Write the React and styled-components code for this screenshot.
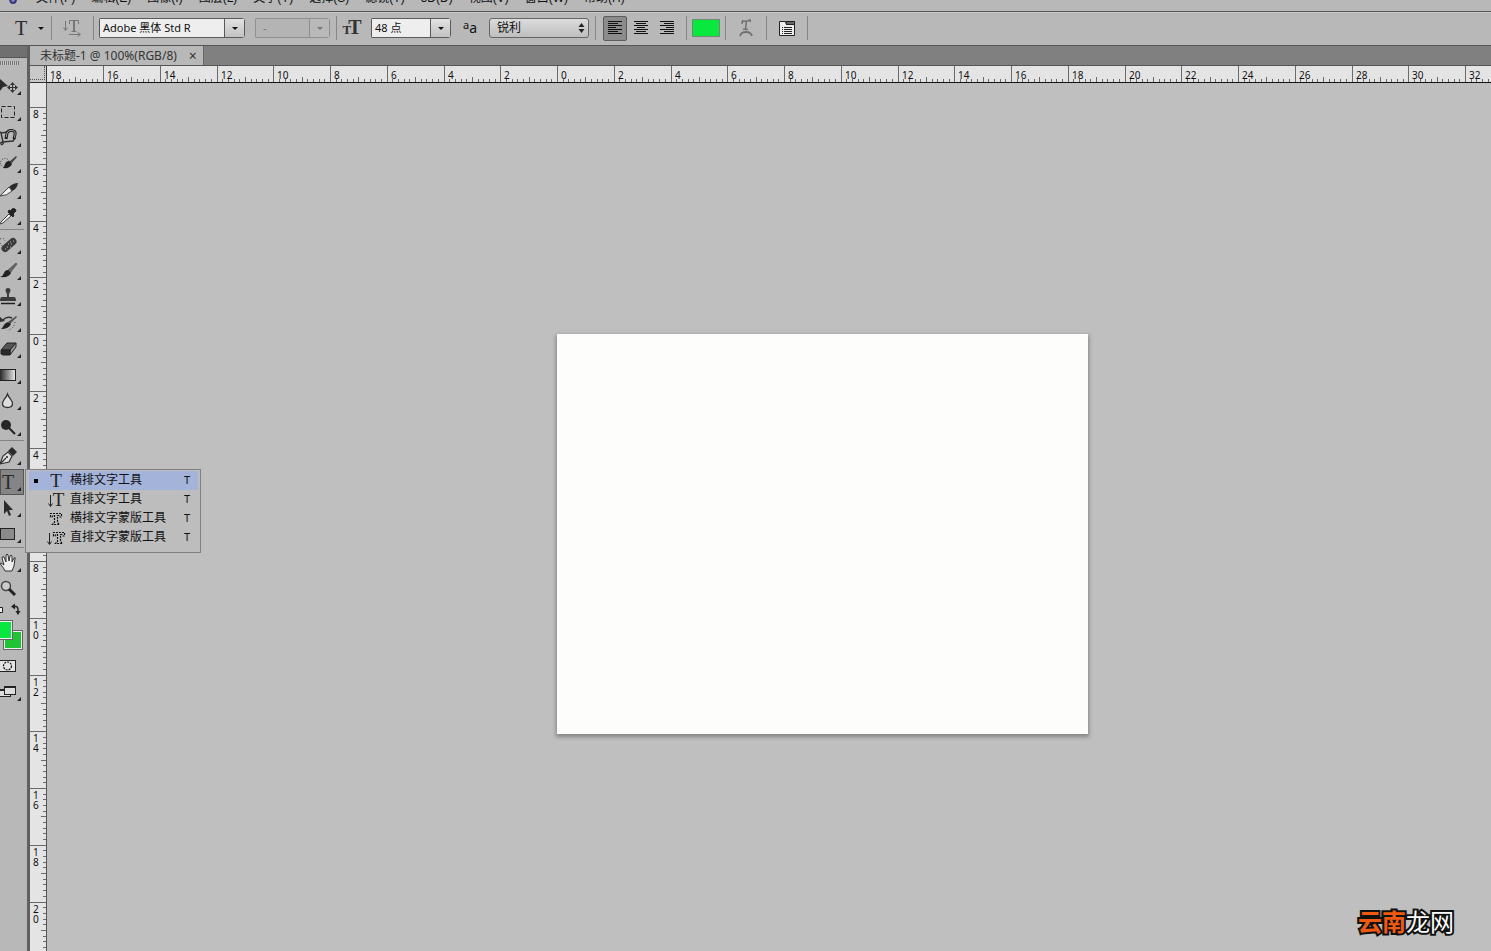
import React, { useEffect, useState } from "react";
import styled, { createGlobalStyle, css } from "styled-components";

const MENUS = [
  "文件(F)",
  "编辑(E)",
  "图像(I)",
  "图层(L)",
  "文字(Y)",
  "选择(S)",
  "滤镜(T)",
  "3D(D)",
  "视图(V)",
  "窗口(W)",
  "帮助(H)",
];

const TYPE_TOOLS = [
  { name: "横排文字工具" },
  { name: "直排文字工具", vertical: true },
  { name: "横排文字蒙版工具", mask: true },
  { name: "直排文字蒙版工具", vertical: true, mask: true },
];

// pixels per 2 units on the rulers, 10 ticks each
const STEP = 56.75;
const ORIGIN_X = 510;
const ORIGIN_Y = 251;

const dark = "#333";

const toolIcons = {
  move: (
    <>
      <path d="M0 6v12l3-4 5-1z" fill="#2b2b2b" />
      <path d="M8 14.5h9M12.5 10v9" stroke={dark} />
      <path
        d="M7 14.5l3-2.500v5zM18 14.5l-3-2.500v5zM12.5 9l-2.500 3h5zM12.5 20l-2.500-3h5z"
        fill={dark}
      />
    </>
  ),
  marquee: (
    <rect x="1.5" y="7.5" width="13" height="11" fill="none" stroke="#222" strokeDasharray="4 2" />
  ),
  lasso: (
    <>
      <path d="M0 7l2 1 5-1M1 8l2 9 10-1 2-3M3 17q-3 0-2 2t3-2" fill="none" stroke={dark} strokeWidth="1.4" />
      <path d="M6 14l1-6q1-3 5-2.500t3 4L14 14" fill="none" stroke="#222" strokeWidth="3" />
      <path d="M6.3 12l.7-4q1-3 5-2.500t3 4l-.5 3" fill="none" stroke="#999" />
    </>
  ),
  quickSelect: (
    <>
      <circle cx="5" cy="12" r="4.5" fill="none" stroke="#333" strokeDasharray="1 1.5" />
      <path d="M16 5l-7 6 2 2 6-7z" fill="#444" />
      <path d="M9 10l3 3q-2 5-9 4 1-1 2-4t4-3z" fill="#222" />
    </>
  ),
  slice: (
    <>
      <path d="M18 6q-5 0-9 4l3 4q5-2 6-8z" fill="#2b2b2b" />
      <path d="M9 10l-9 9q7 0 12-5z" fill="#eee" stroke="#444" />
    </>
  ),
  eyedropper: (
    <>
      <path d="M9 11L1 19l-1 2 3-1 8-7z" fill="#eee" stroke="#444" />
      <path d="M8 9l5 5 1-2-1-1 2-2q2-2 0-3t-3 0l-1 2-2-1z" fill="#222" stroke="#222" />
    </>
  ),
  heal: (
    <>
      <path d="M0 7q4-2 5 2M0 11l2 3" fill="none" stroke="#333" strokeDasharray="1 2" />
      <path d="M5 16.5l8-7" stroke="#3a3a3a" strokeWidth="7" strokeLinecap="round" />
      <path d="M7 15h1M10 15h1M8 12h1M11 12h1M10 10h1M13 9h1M5 17h1" stroke="#bbb" />
    </>
  ),
  brush: (
    <>
      <path d="M16 5L8 12l2 3 7-9z" fill="#666" stroke="#333" strokeWidth=".5" />
      <path d="M8 12l3 3q-2 5-11 4 3-1 4-4t4-3z" fill="#222" />
    </>
  ),
  stamp: (
    <>
      <path d="M5.5 7q0-3 2.500-3t2.500 3l-1.500 3v3h5q2 0 2 4H0q0-4 2-4h5v-3z" fill="#3a3a3a" />
      <path d="M1 19.5h14" stroke="#222" strokeWidth="1.5" />
    </>
  ),
  history: (
    <>
      <path d="M16 6l-8 6 2 2 7-7z" fill="#555" />
      <path d="M8 12l3 2q-2 5-10 5 2-2 3-4t4-3z" fill="#222" />
      <path d="M3 10q4-4 9-2" fill="none" stroke="#333" strokeWidth="1.5" />
      <path d="M0 12V7l5 4z" fill="#333" />
      <path d="M15 12q-1 6-6 8" fill="none" stroke="#333" strokeDasharray="1 2" />
    </>
  ),
  eraser: (
    <>
      <path d="M1 14l6-7h9l-6 7z" fill="#555" stroke="#222" />
      <path d="M10 14l6-7v4l-6 8z" fill="#999" stroke="#222" />
      <path d="M1 14h9v5H3l-2-1z" fill="#2b2b2b" stroke="#222" />
    </>
  ),
  gradient: (
    <>
      <defs>
        <linearGradient id="toolGradient">
          <stop offset="0" stopColor="#222" />
          <stop offset="1" stopColor="#eee" />
        </linearGradient>
      </defs>
      <rect x="-0.5" y="7.5" width="16" height="11" fill="url(#toolGradient)" stroke="#222" />
    </>
  ),
  blur: (
    <path d="M7.5 6q1 3 3 5 2 3 2 4.500 0 4-5 4t-5-4q0-1.500 2-4.500 2-2 3-5z" fill="#ddd" stroke="#333" strokeWidth="1.3" />
  ),
  dodge: (
    <>
      <circle cx="6" cy="11" r="5" fill="#262626" />
      <path d="M9 14l6 6" stroke="#222" strokeWidth="2" />
    </>
  ),
  pen: (
    <>
      <path d="M0 21l3-8 5-4 4 4-3 6-9 2 6-6" fill="#ddd" stroke="#333" strokeWidth="1.2" />
      <path d="M8 8l4-4 5 5-4 4z" fill="#2b2b2b" />
      <circle cx="7" cy="14" r="1" fill="#222" />
    </>
  ),
  pathSelect: <path d="M4 5v14l3-3 2 5 2-1-2-5h4z" fill="#2b2b2b" />,
  shape: <rect x="0.5" y="7.5" width="14" height="11" fill="#8b8b8b" stroke="#222" />,
  hand: (
    <path
      d="M5 21q-1-3-4-6-2-2 0-2l3 2-2-7q0-2 2-1l2 5V5q1-2 2 0l1 6 1-5q1-2 2 0v6l2-4q2-1 1 1l-1 7-2 5z"
      fill="#eee"
      stroke="#333"
    />
  ),
  zoom: (
    <>
      <circle cx="6" cy="10" r="4.5" fill="#ccc" stroke="#444" strokeWidth="1.5" />
      <path d="M9 13l6 6" stroke="#222" strokeWidth="3" />
    </>
  ),
};

const TOOL_GROUPS = [
  [
    ["move", "移动工具"],
    ["marquee", "矩形选框工具"],
    ["lasso", "磁性套索工具"],
    ["quickSelect", "快速选择工具"],
    ["slice", "切片工具"],
    ["eyedropper", "吸管工具"],
  ],
  [
    ["heal", "污点修复画笔工具"],
    ["brush", "画笔工具"],
    ["stamp", "仿制图章工具"],
    ["history", "历史记录画笔工具"],
    ["eraser", "橡皮擦工具"],
    ["gradient", "渐变工具"],
    ["blur", "模糊工具"],
    ["dodge", "减淡工具"],
  ],
  [
    ["pen", "钢笔工具"],
    ["type", "横排文字工具"],
    ["pathSelect", "路径选择工具"],
    ["shape", "矩形工具"],
  ],
  [
    ["hand", "抓手工具"],
    ["zoom", "缩放工具"],
  ],
];

function useWindowSize() {
  const [size, setSize] = useState([window.innerWidth, window.innerHeight]);
  useEffect(() => {
    const update = () => setSize([window.innerWidth, window.innerHeight]);
    window.addEventListener("resize", update);
    return () => window.removeEventListener("resize", update);
  }, []);
  return size;
}

function Ruler({ vertical }) {
  const [width, height] = useWindowSize();
  const origin = vertical ? ORIGIN_Y : ORIGIN_X;
  // the rulers start below the bars and right of the toolbox
  const end = vertical ? height - 83 : width - 47;
  const ticks = [];
  const labels = [];
  for (let i = -Math.round(origin / STEP) * 10; ; i++) {
    const pos = Math.round(origin + (i * STEP) / 10);
    if (pos > end) break;
    const isMajor = i % 10 === 0;
    const length = isMajor ? 17 : i % 5 === 0 ? 6 : 4;
    if (pos >= 0) {
      ticks.push(
        vertical
          ? `M${17 - length} ${pos + 0.5}h${length}`
          : `M${pos + 0.5} ${17 - length}v${length}`
      );
    }
    if (isMajor && pos >= -1 && pos + 20 < end + 6) {
      labels.push({ pos, text: String(Math.abs(i / 10) * 2) });
    }
  }
  return (
    <RulerSvg aria-hidden="true">
      <path d={ticks.join("")} stroke="#6a6a6a" fill="none" />
      {labels.map(({ pos, text }) =>
        vertical ? (
          text.split("").map((digit, i) => (
            <text key={pos + "-" + i} x="3" y={pos + 11 + i * 10}>
              {digit}
            </text>
          ))
        ) : (
          <text key={pos} x={pos + 4} y="13">
            {text}
          </text>
        )
      )}
    </RulerSvg>
  );
}

function AlignIcon({ align }) {
  const rows = [14, 10, 14, 8, 14, 10, 14];
  return (
    <svg width="16" height="16" aria-hidden="true">
      {rows.map((w, i) => {
        const x = align === "left" ? 1 : align === "right" ? 15 - w : 8 - w / 2;
        return <rect key={i} x={x} y={1 + i * 2} width={w} height="1" fill="#111" />;
      })}
    </svg>
  );
}

function TypeGlyph({ vertical, mask }) {
  return (
    <Glyph>
      {vertical && (
        <svg width="5" height="14" aria-hidden="true">
          <path d="M2.5 2v11M0.5 10.5l2 3 2-3" fill="none" stroke="#222" />
        </svg>
      )}
      {mask ? (
        <svg width="14" height="15" aria-hidden="true">
          <path
            d="M1.5 6V2.500h11V6H11l-1-1.500H8.500v7l2 2h-7l2-2v-7H4L3 6z"
            fill="none"
            stroke="#111"
            strokeWidth="1.2"
            strokeDasharray="2 1"
          />
        </svg>
      ) : (
        "T"
      )}
    </Glyph>
  );
}

function Combo({ label, width, value, disabled }) {
  return (
    <ComboBox $width={width} $disabled={disabled}>
      <input aria-label={label} defaultValue={value} disabled={disabled} />
      <button type="button" aria-label={label + "列表"} disabled={disabled}>
        <Caret />
      </button>
    </ComboBox>
  );
}

function OptionsBar() {
  const [align, setAlign] = useState("left");
  return (
    <Options>
      <PresetButton type="button" aria-label="工具预设">
        <BigT>T</BigT>
        <Caret />
      </PresetButton>
      <Divider />
      <Slot $width={41}>
        <IconButton type="button" aria-label="切换文本取向">
          <svg width="20" height="18" fill="none" stroke="#777">
            <path d="M2.5 2v9M0.5 8.5l2 3 2-3M6 15.5h11M14.5 13.5l3 2-3 2" />
            <path d="M6.5 5V1.500h9V5M8.500 12.5h5" />
            <path d="M11 2v10" strokeWidth="2" />
          </svg>
        </IconButton>
      </Slot>
      <Divider />
      <ComboGroup>
        <Combo label="字体" width={146} value="Adobe 黑体 Std R" />
        <Combo label="字体样式" width={75} value="-" disabled />
      </ComboGroup>
      <Divider />
      <Slot $width={34}>
        <SizeIcon aria-hidden="true">
          <small>T</small>
          <b>T</b>
        </SizeIcon>
      </Slot>
      <Combo label="字体大小" width={80} value="48 点" />
      <Slot $width={38}>
        <AntiAlias htmlFor="antialias">
          <sup>a</sup>a
        </AntiAlias>
      </Slot>
      <SelectBox>
        <select id="antialias" aria-label="消除锯齿" defaultValue="锐利">
          <option>锐利</option>
          <option>犀利</option>
          <option>平滑</option>
        </select>
        <svg width="7" height="10" aria-hidden="true">
          <path d="M0.5 4l3-4 3 4zM0.5 6h6l-3 4z" fill="#222" />
        </svg>
      </SelectBox>
      <Spacer />
      <Divider />
      <AlignGroup>
        {[
          ["left", "左对齐文本"],
          ["center", "居中对齐文本"],
          ["right", "右对齐文本"],
        ].map(([key, label]) => (
          <AlignButton
            key={key}
            type="button"
            aria-label={label}
            aria-pressed={align === key}
            $active={align === key}
            onClick={() => setAlign(key)}
          >
            <AlignIcon align={key} />
          </AlignButton>
        ))}
      </AlignGroup>
      <Divider />
      <Slot $width={38}>
        <TextColor type="button" aria-label="设置文本颜色" />
      </Slot>
      <Divider />
      <Slot $width={40}>
        <IconButton type="button" aria-label="创建文字变形">
          <svg width="16" height="20" fill="none" stroke="#707070">
            <path d="M4 6l.5-3q4 1 7.500-1l.5 2M8.500 3L7.500 11M5 11l5 .5" strokeWidth="1.5" />
            <path d="M2 18q1-4 6-4t6 4" strokeWidth="1.8" />
          </svg>
        </IconButton>
      </Slot>
      <Divider />
      <Slot $width={40}>
        <IconButton type="button" aria-label="切换字符和段落面板">
          <svg width="17" height="17" fill="none" stroke="#222">
            <path d="M0.5 1.500h6l1 3h8v11h-15z" fill="#eee" />
            <path d="M7 1.500h8.500v3h-8z" fill="#666" />
            <path d="M3 7.500h1M5 7.500h8M3 9.500h1M5 9.500h8M3 11.500h1M5 11.500h8M3 13.500h1M5 13.500h8" />
          </svg>
        </IconButton>
      </Slot>
      <Divider />
    </Options>
  );
}

function TypeFlyout() {
  return (
    <Flyout>
      {TYPE_TOOLS.map((tool, i) => (
        <FlyoutItem key={tool.name} type="button" $active={i === 0}>
          <Bullet $visible={i === 0} />
          <TypeGlyph vertical={tool.vertical} mask={tool.mask} />
          <span>{tool.name}</span>
          <kbd>T</kbd>
        </FlyoutItem>
      ))}
    </Flyout>
  );
}

function Toolbox() {
  return (
    <ToolPanel>
      <PanelHeader />
      <Grip />
      {TOOL_GROUPS.map((group, i) => (
        <ToolGroup key={i}>
          {group.map(([id, label]) => (
            <ToolSlot key={id}>
              <ToolButton type="button" aria-label={label} $active={id === "type"}>
                {id === "type" && <BigT>T</BigT>}
                <svg width="24" height="26" aria-hidden="true">
                  {toolIcons[id]}
                  {id !== "zoom" && <path d="M21 18v4h-4z" fill="#222" />}
                </svg>
              </ToolButton>
              {id === "type" && <TypeFlyout />}
            </ToolSlot>
          ))}
        </ToolGroup>
      ))}
      <SmallTool type="button" aria-label="切换前景色和背景色">
        <svg width="24" height="16">
          <path d="M-1.500 5.500h4v5h-4z" fill="#eee" stroke="#222" />
          <path d="M13 4.500h3q2 0 2 4v3" fill="none" stroke="#222" strokeWidth="1.5" />
          <path d="M11 4.500l4-3v6zM15.500 9h5L18 13z" fill="#222" />
        </svg>
      </SmallTool>
      <Swatches>
        <button type="button" aria-label="背景色" />
        <button type="button" aria-label="前景色" />
      </Swatches>
      <ToolButton type="button" aria-label="以快速蒙版模式编辑">
        <svg width="24" height="26">
          <rect x="-0.5" y="7.5" width="16" height="11" fill="#e4e4e4" stroke="#222" />
          <circle cx="7.500" cy="13" r="4" fill="none" stroke="#111" strokeWidth="1.2" strokeDasharray="2 1" />
        </svg>
      </ToolButton>
      <ToolButton type="button" aria-label="更改屏幕模式">
        <svg width="24" height="26">
          <rect x="-0.5" y="10.500" width="11" height="7" fill="#ddd" stroke="#222" />
          <path d="M0 11h5" stroke="#222" strokeWidth="2" />
          <rect x="4.500" y="7.500" width="11" height="8" fill="#ddd" stroke="#222" />
          <path d="M4 8h12" stroke="#222" strokeWidth="2" />
          <path d="M21 18v4h-4z" fill="#222" />
        </svg>
      </ToolButton>
    </ToolPanel>
  );
}

function App() {
  return (
    <Window>
      <GlobalStyle />
      <MenuBar>
        <svg width="36" height="11" aria-hidden="true">
          <path d="M10 -2q0 5 3 5t3-4" fill="#8a8ac0" stroke="#34347c" strokeWidth="2" />
        </svg>
        {MENUS.map((menu) => (
          <button type="button" key={menu}>
            {menu}
          </button>
        ))}
      </MenuBar>
      <OptionsBar />
      <Main>
        <Toolbox />
        <DocumentArea>
          <TabStrip>
            <Tab>
              未标题-1 @ 100%(RGB/8)
              <button type="button" aria-label="关闭">
                ×
              </button>
            </Tab>
          </TabStrip>
          <RulerGrid>
            <RulerCorner />
            <RulerTop>
              <Ruler />
            </RulerTop>
            <RulerLeft>
              <Ruler vertical />
            </RulerLeft>
            <Workspace>
              <Canvas />
            </Workspace>
          </RulerGrid>
        </DocumentArea>
      </Main>
      <Watermark>
        <em>云南</em>龙网
      </Watermark>
    </Window>
  );
}

const GlobalStyle = createGlobalStyle`
  * {
    box-sizing: border-box;
  }
  body {
    margin: 0;
    background: #bfbfbf;
    color: #111;
    font: 12px/16px "Noto Sans", "Noto Sans CJK SC", sans-serif;
  }
  button, input, select {
    margin: 0;
    padding: 0;
    border: 0;
    background: none;
    color: inherit;
    font: inherit;
  }
  svg {
    display: block;
  }
`;

const Window = styled.div`
  position: relative;
  height: 100vh;
  display: flex;
  flex-direction: column;
  overflow: hidden;
`;

const MenuBar = styled.nav`
  flex: none;
  height: 12px;
  display: flex;
  align-items: flex-end;
  padding-bottom: 5px;
  overflow: hidden;
  background: #b8b8b8;
  border-bottom: 1px solid #555;
  font-family: "Liberation Sans", "Noto Sans CJK SC", sans-serif;
  svg {
    flex: none;
    align-self: flex-start;
  }
  button {
    flex: none;
    margin-right: 16px;
    white-space: nowrap;
  }
`;

const Options = styled.div`
  flex: none;
  height: 34px;
  display: flex;
  align-items: center;
  padding-bottom: 2px;
  background: #b8b8b8;
  border-top: 1px solid #cacaca;
  border-bottom: 1px solid #555;
  font-size: 11px;
`;

const Divider = styled.i`
  flex: none;
  width: 1px;
  height: 24px;
  background: #858585;
`;

const Spacer = styled.div`
  width: 6px;
`;

const Slot = styled.div`
  flex: none;
  width: ${(props) => props.$width}px;
  display: flex;
  align-items: center;
  justify-content: center;
`;

const Caret = styled.i`
  width: 0;
  height: 0;
  border: 3px solid transparent;
  border-top-color: currentColor;
  border-bottom: 0;
`;

const BigT = styled.span`
  color: #2b2b2b;
  font: 20px/24px "Liberation Serif", serif;
`;

const PresetButton = styled.button`
  flex: none;
  width: 51px;
  display: flex;
  align-items: center;
  gap: 11px;
  padding-left: 15px;
`;

const IconButton = styled.button`
  display: flex;
`;

const ComboGroup = styled.div`
  display: flex;
  gap: 10px;
  padding: 0 6px 0 5px;
`;

const ComboBox = styled.div`
  flex: none;
  width: ${(props) => props.$width}px;
  height: 20px;
  display: flex;
  border: 1px solid #5a5a5a;
  border-radius: 1px 3px 3px 1px;
  background: #eee;
  input {
    flex: 1;
    min-width: 0;
    padding-left: 3px;
  }
  button {
    width: 20px;
    display: flex;
    align-items: center;
    justify-content: center;
    border-left: 1px solid #5a5a5a;
    background: linear-gradient(#e2e2e2, #c2c2c2);
  }
  ${(props) =>
    props.$disabled &&
    css`
      color: #777;
      border-color: #909090;
      background: #b4b4b4;
      input {
        padding-left: 7px;
      }
      button {
        border-color: #909090;
        background: #b9b9b9;
      }
    `}
`;

const SizeIcon = styled.span`
  display: flex;
  align-items: baseline;
  padding-right: 4px;
  color: #333;
  font: 20px/20px "Liberation Serif", serif;
  small {
    margin-right: -3px;
    font-size: 13px;
    font-weight: bold;
  }
`;

const AntiAlias = styled.label`
  font: 14px/20px "Noto Sans", sans-serif;
  sup {
    font-size: 11px;
    line-height: 11px;
    vertical-align: 4px;
  }
`;

const SelectBox = styled.div`
  flex: none;
  position: relative;
  width: 100px;
  height: 20px;
  select {
    width: 100%;
    height: 100%;
    appearance: none;
    padding-left: 7px;
    border: 1px solid #666;
    border-radius: 3px;
    background: linear-gradient(#dcdcdc, #bebebe);
    font-size: 12px;
  }
  svg {
    position: absolute;
    right: 4px;
    top: 5px;
    pointer-events: none;
  }
`;

const AlignGroup = styled.div`
  flex: none;
  display: flex;
  gap: 2px;
  padding: 0 7px;
`;

const AlignButton = styled.button`
  width: 24px;
  height: 25px;
  display: flex;
  align-items: center;
  justify-content: center;
  border: 1px solid ${(props) => (props.$active ? "#5c5c5c" : "transparent")};
  border-radius: 2px;
  background: ${(props) => (props.$active ? "#8b8b8b" : "none")};
`;

const TextColor = styled.button`
  width: 28px;
  height: 18px;
  border: 1px solid #6f8a72;
  background: #0ae73e;
`;

const Main = styled.div`
  flex: 1;
  min-height: 0;
  display: flex;
`;

const ToolPanel = styled.aside`
  position: relative;
  z-index: 1;
  flex: none;
  width: 30px;
  display: flex;
  flex-direction: column;
  background: #b8b8b8;
  border-right: 3px solid #606060;
`;

const PanelHeader = styled.div`
  flex: none;
  height: 12px;
  background: #707070;
  border-bottom: 1px solid #555;
`;

const Grip = styled.div`
  flex: none;
  width: 19px;
  height: 4px;
  margin: 3px 0 8px;
  background: repeating-linear-gradient(90deg, #777 0 1px, #c4c4c4 1px 2px);
`;

const ToolGroup = styled.div`
  width: 24px;
  & + & {
    border-top: 1px solid #858585;
    padding-top: 2px;
  }
`;

const ToolSlot = styled.div`
  position: relative;
`;

const ToolButton = styled.button`
  position: relative;
  flex: none;
  display: block;
  width: 24px;
  height: 26px;
  ${(props) =>
    props.$active &&
    css`
      background: #858585;
      outline: 1px solid #555;
      outline-offset: -1px;
    `}
  svg {
    position: absolute;
    inset: 0;
  }
  ${BigT} {
    display: block;
    width: 16px;
    text-align: center;
  }
`;

const SmallTool = styled.button`
  width: 24px;
  height: 16px;
`;

const Swatches = styled.div`
  flex: none;
  position: relative;
  width: 24px;
  height: 32px;
  margin: 3px 0 0;
  button {
    position: absolute;
    left: 4px;
    top: 10px;
    width: 18px;
    height: 18px;
    border: 1px solid #eee;
    outline: 1px solid #666;
    background: #1fc336;
  }
  button + button {
    left: -6px;
    top: 0;
    background: #0ae73e;
  }
`;

const Flyout = styled.div`
  position: absolute;
  left: 25px;
  top: 0;
  width: 176px;
  padding: 1px 2px 5px 3px;
  background: #bdbdbd;
  border: 1px solid #808080;
`;

const FlyoutItem = styled.button`
  width: 100%;
  height: 19px;
  display: grid;
  grid-template-columns: 14px 27px 1fr 14px;
  align-items: center;
  text-align: left;
  white-space: nowrap;
  background: ${(props) => (props.$active ? "#a4b3da" : "none")};
  span,
  kbd {
    padding-bottom: 2px;
  }
  kbd {
    font: 11px/16px "Noto Sans", sans-serif;
  }
`;

const Bullet = styled.i`
  width: 4px;
  height: 4px;
  margin-left: 5px;
  background: ${(props) => (props.$visible ? "#000" : "none")};
`;

const Glyph = styled.i`
  display: flex;
  align-items: center;
  justify-content: center;
  padding-right: 1px;
  color: #222;
  font: 19px/19px "Liberation Serif", serif;
`;

const DocumentArea = styled.main`
  flex: 1;
  min-width: 0;
  display: flex;
  flex-direction: column;
`;

const TabStrip = styled.div`
  flex: none;
  height: 20px;
  display: flex;
  background: #808080;
  border-bottom: 1px solid #555;
`;

const Tab = styled.div`
  display: flex;
  align-items: center;
  gap: 12px;
  padding: 1px 6px 0 10px;
  background: #b8b8b8;
  border-right: 1px solid #666;
  color: #333;
  button {
    font-size: 14px;
  }
`;

const RulerGrid = styled.div`
  flex: 1;
  min-height: 0;
  display: grid;
  grid-template: 17px minmax(0, 1fr) / 17px minmax(0, 1fr);
`;

const RulerCorner = styled.div`
  display: flex;
  background: #c9c9c9;
  border-right: 1px solid #333;
  border-bottom: 1px solid #333;
  &::before {
    content: "";
    width: 14px;
    height: 13px;
    border-right: 1px dotted #555;
    border-bottom: 1px dotted #555;
  }
`;

const RulerTop = styled.div`
  background: #e4e4e4;
  border-bottom: 1px solid #111;
`;

const RulerLeft = styled.div`
  background: #e4e4e4;
  border-right: 1px solid #555;
`;

const RulerSvg = styled.svg`
  width: 100%;
  height: 100%;
  fill: #111;
  font: 10px "Noto Sans", sans-serif;
`;

const Workspace = styled.section`
  overflow: hidden;
  padding: ${ORIGIN_Y}px 0 0 ${ORIGIN_X}px;
  background: #bfbfbf;
`;

const Canvas = styled.div`
  width: 531px;
  height: 400px;
  background: #fdfefc;
  box-shadow: 0 2px 4px 1px rgba(0, 0, 0, 0.3);
`;

const Watermark = styled.div`
  position: absolute;
  right: 37px;
  bottom: 17px;
  color: #fff;
  font: 400 24px/26px "Noto Sans CJK SC", sans-serif;
  -webkit-text-stroke: 4px #111;
  paint-order: stroke fill;
  stroke-linejoin: round;
  em {
    font-style: normal;
    font-weight: 700;
    color: #ee5a12;
  }
`;

export default App;
